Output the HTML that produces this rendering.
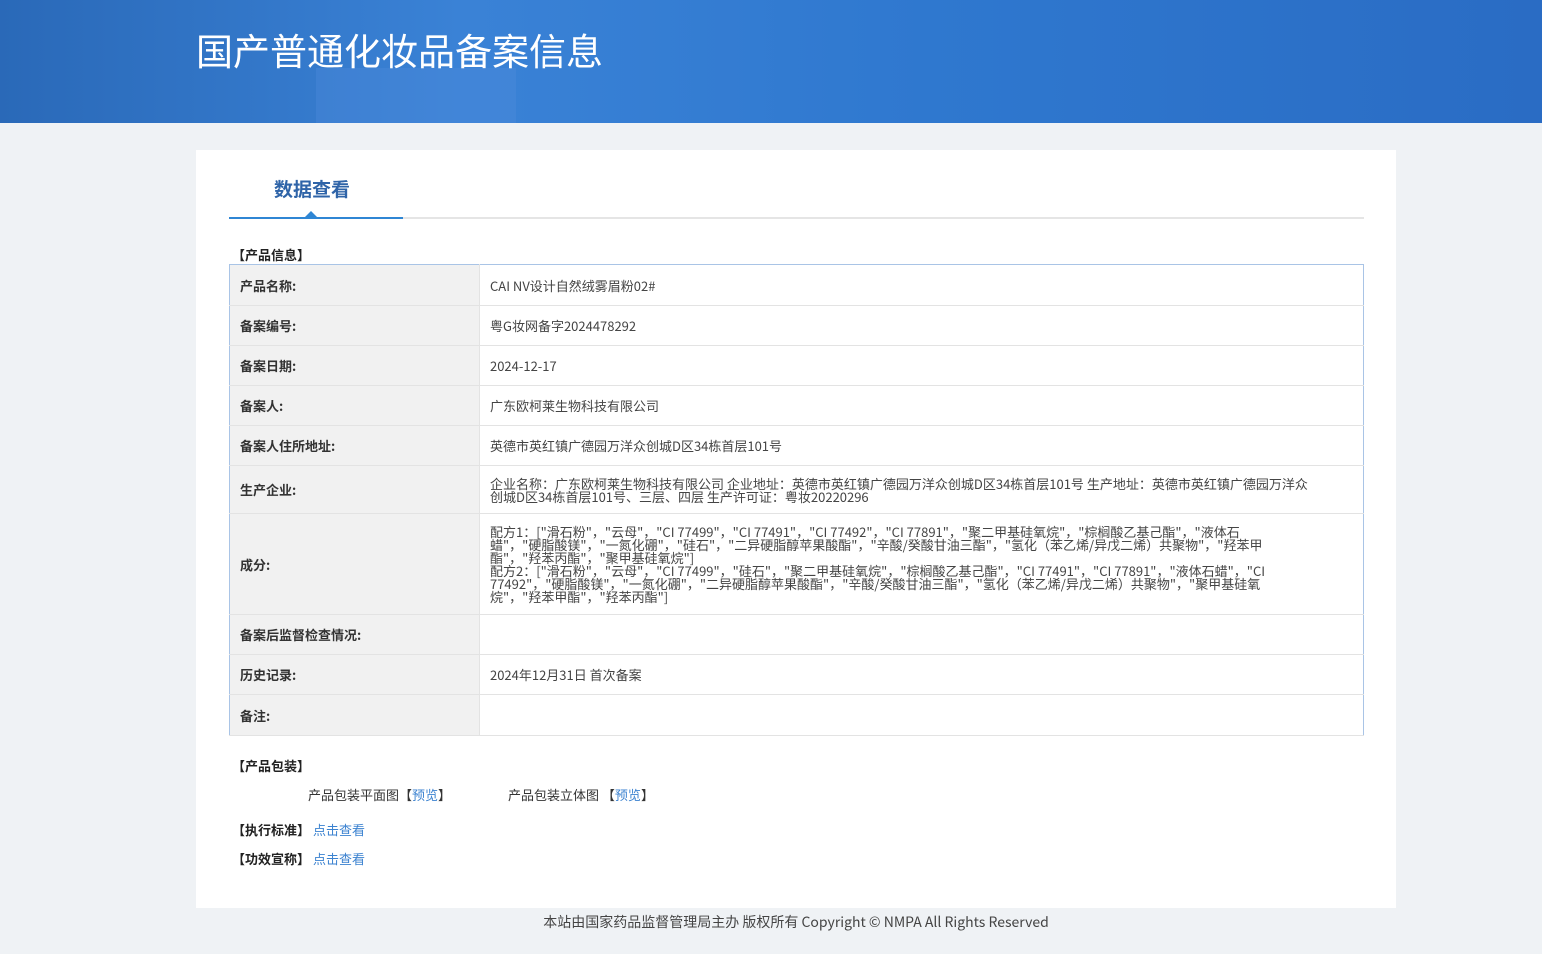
<!DOCTYPE html>
<html><head><meta charset="utf-8"><style>
*{margin:0;padding:0;box-sizing:border-box}
body{width:1542px;height:954px;background:#eff2f5;font-family:"Noto Sans CJK SC","Liberation Sans",sans-serif;color:#333;position:relative;overflow:hidden}
.hd{position:absolute;left:0;top:0;width:1542px;height:123px;background:linear-gradient(90deg,#2a69b8 0%,#3a82d6 30%,#2f78cf 60%,#2a6cc4 100%);overflow:hidden}
.hd .b1{position:absolute;left:316px;top:68px;width:200px;height:60px;background:rgba(80,140,220,.35)}
.hd h1{position:absolute;left:196px;top:24px;font-size:37px;font-weight:normal;color:#fff;line-height:50px;font-family:"Noto Sans CJK SC",sans-serif}
.card{position:absolute;left:196px;top:150px;width:1200px;height:758px;background:#fff}
.tab{position:absolute;font-size:19px;font-weight:bold;color:#2f64a8;line-height:26px}
.line{position:absolute;width:1135px;height:2px;background:#e5e5e5}
.line2{position:absolute;width:174px;height:2px;background:#2f86d4}
.tri{position:absolute;width:0;height:0;border-left:6px solid transparent;border-right:6px solid transparent;border-bottom:6px solid #2f86d4}
.sec{position:absolute;font-size:13px;font-weight:bold;color:#222;line-height:18px}
table{position:absolute;left:229px;top:264px;width:1135px;border-collapse:collapse;border:1px solid #a9c4e6;font-size:13px}
td{border-bottom:1px solid #e3e3e3;padding:0 10px;line-height:13px}
td.l{width:250px;background:#f1f1f1;font-weight:bold;color:#333;border-right:1px solid #e3e3e3}
td.v{color:#444}
a{color:#3b82d0;text-decoration:none}
.ft{position:absolute;top:912px;text-align:center;font-size:14px;color:#444;line-height:20px}
</style></head><body>
<div class="hd"><div class="b1"></div><h1>国产普通化妆品备案信息</h1></div>
<div class="card"></div>
<div class="tab" style="left:274px;top:176px">数据查看</div>
<div class="line" style="left:229px;top:217px"></div>
<div class="line2" style="left:229px;top:217px"></div>
<div class="tri" style="left:305px;top:211px"></div>
<div class="sec" style="left:232px;top:246px">【产品信息】</div>
<table>
<tr style="height:41px"><td class="l">产品名称:</td><td class="v">CAI NV设计自然绒雾眉粉02#</td></tr>
<tr style="height:40px"><td class="l">备案编号:</td><td class="v">粤G妆网备字2024478292</td></tr>
<tr style="height:40px"><td class="l">备案日期:</td><td class="v">2024-12-17</td></tr>
<tr style="height:40px"><td class="l">备案人:</td><td class="v">广东欧柯莱生物科技有限公司</td></tr>
<tr style="height:40px"><td class="l">备案人住所地址:</td><td class="v">英德市英红镇广德园万洋众创城D区34栋首层101号</td></tr>
<tr style="height:48px"><td class="l">生产企业:</td><td class="v" style="padding-right:50px">企业名称：广东欧柯莱生物科技有限公司 企业地址：英德市英红镇广德园万洋众创城D区34栋首层101号 生产地址：英德市英红镇广德园万洋众创城D区34栋首层101号、三层、四层 生产许可证：粤妆20220296</td></tr>
<tr style="height:101px"><td class="l">成分:</td><td class="v" style="padding-right:80px">配方1：["滑石粉"，"云母"，"CI 77499"，"CI 77491"，"CI 77492"，"CI 77891"，"聚二甲基硅氧烷"，"棕榈酸乙基己酯"，"液体石蜡"，"硬脂酸镁"，"一氮化硼"，"硅石"，"二异硬脂醇苹果酸酯"，"辛酸/癸酸甘油三酯"，"氢化（苯乙烯/异戊二烯）共聚物"，"羟苯甲酯"，"羟苯丙酯"，"聚甲基硅氧烷"]<br>配方2：["滑石粉"，"云母"，"CI 77499"，"硅石"，"聚二甲基硅氧烷"，"棕榈酸乙基己酯"，"CI 77491"，"CI 77891"，"液体石蜡"，"CI 77492"，"硬脂酸镁"，"一氮化硼"，"二异硬脂醇苹果酸酯"，"辛酸/癸酸甘油三酯"，"氢化（苯乙烯/异戊二烯）共聚物"，"聚甲基硅氧烷"，"羟苯甲酯"，"羟苯丙酯"]</td></tr>
<tr style="height:40px"><td class="l">备案后监督检查情况:</td><td class="v"></td></tr>
<tr style="height:40px"><td class="l">历史记录:</td><td class="v">2024年12月31日 首次备案</td></tr>
<tr style="height:41px"><td class="l">备注:</td><td class="v"></td></tr>
</table>
<div class="sec" style="left:232px;top:757px">【产品包装】</div>
<div style="position:absolute;left:308px;top:786px;font-size:13px;line-height:18px">产品包装平面图【<a>预览</a>】</div>
<div style="position:absolute;left:508px;top:786px;font-size:13px;line-height:18px">产品包装立体图 【<a>预览</a>】</div>
<div class="sec" style="left:232px;top:821px">【执行标准】 <a style="font-weight:normal">点击查看</a></div>
<div class="sec" style="left:232px;top:850px">【功效宣称】 <a style="font-weight:normal">点击查看</a></div>
<div class="ft" style="left:0;width:1592px">本站由国家药品监督管理局主办 版权所有 Copyright © NMPA All Rights Reserved</div>
</body></html>
